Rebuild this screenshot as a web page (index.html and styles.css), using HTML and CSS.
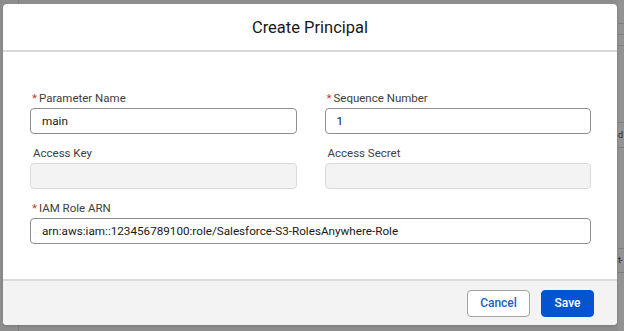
FILE: index.html
```html
<!DOCTYPE html>
<html lang="en">
<head>
<meta charset="utf-8">
<title>Create Principal</title>
<link rel="stylesheet" href="styles.css">
</head>
<body>
<div class="backdrop">
  <div class="page-behind" aria-hidden="true">
    <div class="behind-col"></div>
    <div class="behind-strip">
      <span class="bl bl1"></span><span class="bl bl2"></span><span class="bl bl3"></span>
      <span class="bl bl4"></span><span class="bt bt1">d</span><span class="bl bl5"></span>
      <span class="bl bl6"></span><span class="bt bt2">t-</span><span class="bl bl7"></span>
    </div>
  </div>
  <section class="modal">
    <header class="modal-header">
      <h2 class="modal-title">Create Principal</h2>
    </header>
    <div class="modal-body">
      <div class="form-grid">
        <div class="field">
          <label class="field-label"><abbr class="req">*</abbr>Parameter Name</label>
          <div class="input">main</div>
        </div>
        <div class="field">
          <label class="field-label"><abbr class="req">*</abbr>Sequence Number</label>
          <div class="input">1</div>
        </div>
        <div class="field">
          <label class="field-label">Access Key</label>
          <div class="input disabled"></div>
        </div>
        <div class="field">
          <label class="field-label">Access Secret</label>
          <div class="input disabled"></div>
        </div>
        <div class="field wide">
          <label class="field-label"><abbr class="req">*</abbr>IAM Role ARN</label>
          <div class="input">arn:aws:iam::123456789100:role/Salesforce-S3-RolesAnywhere-Role</div>
        </div>
      </div>
    </div>
    <footer class="modal-footer">
      <button class="btn btn-neutral">Cancel</button>
      <button class="btn btn-brand">Save</button>
    </footer>
  </section>
</div>
</body>
</html>
```

FILE: styles.css
```css
* { box-sizing: border-box; }
html, body { margin: 0; padding: 0; }
body {
  width: 624px;
  height: 331px;
  overflow: hidden;
  background: #8d8d8d;
  font-family: Roboto, "Liberation Sans", Arial, sans-serif;
  color: #181818;
}
.backdrop {
  position: relative;
  width: 624px;
  height: 331px;
  padding: 4px 7px 6px 3px;
}
.page-behind {
  position: absolute;
  inset: 0;
  pointer-events: none;
}
.behind-col {
  position: absolute;
  left: 18px;
  top: 0;
  bottom: 0;
  width: 1px;
  background: #7c7c7c;
}
.behind-strip {
  position: absolute;
  left: 618px;
  top: 0;
  width: 6px;
  height: 331px;
  background: #939393;
  overflow: hidden;
}
.bl { position: absolute; left: 0; right: 0; height: 1px; background: #7f7f7f; }
.bl1 { top: 23px; }
.bl2 { top: 34px; }
.bl3 { top: 45px; }
.bl4 { top: 122px; }
.bl5 { top: 147px; }
.bl6 { top: 248px; }
.bl7 { top: 272px; }
.bt { position: absolute; left: 0; font-size: 9px; color: #2a2a2a; line-height: 10px; letter-spacing: -1px; }
.bt1 { top: 130px; }
.bt2 { top: 255px; }

.modal {
  position: relative;
  width: 614px;
  height: 321px;
  background: #fff;
  border-radius: 4px;
  display: flex;
  flex-direction: column;
  overflow: hidden;
  box-shadow: 0 1px 2px rgba(0,0,0,0.15);
}
.modal-header {
  height: 48px;
  border-bottom: 2px solid #d9d9d9;
  display: flex;
  align-items: center;
  justify-content: center;
  padding-top: 1px;
}
.modal-title {
  margin: 0;
  font-size: 16.5px;
  font-weight: 400;
  color: #181818;
}
.modal-body {
  flex: 1;
  padding: 39px 26px 0 27px;
}
.form-grid {
  display: grid;
  grid-template-columns: 1fr 1fr;
  column-gap: 28px;
  row-gap: 12px;
}
.field { display: flex; flex-direction: column; }
.field.wide { grid-column: 1 / -1; }
.field-label {
  height: 14px;
  line-height: 14px;
  margin-bottom: 3px;
  font-size: 11.5px;
  color: #3e3e3c;
  padding-left: 3px;
}
.req {
  color: #c23934;
  text-decoration: none;
  margin-right: 2px;
  margin-left: -1px;
}
.input {
  height: 26px;
  border: 1px solid #8f8f8f;
  border-radius: 4px;
  padding: 0 11px;
  display: flex;
  align-items: center;
  font-size: 11.7px;
  color: #181818;
  background: #fff;
}
.input.disabled {
  background: #f3f3f3;
  border-color: #d9d9d9;
}
.modal-footer {
  height: 46px;
  background: #f3f3f3;
  border-top: 2px solid #dcdcdc;
  display: flex;
  align-items: center;
  justify-content: flex-end;
  gap: 11px;
  padding: 0 23px 0 0;
}
.btn {
  height: 27px;
  border-radius: 4px;
  font-family: inherit;
  font-size: 12px;
  font-weight: 500;
  padding: 0;
  cursor: pointer;
}
.btn-neutral {
  width: 63px;
  background: #fff;
  border: 1px solid #a3a3a3;
  color: #1b60c4;
}
.btn-brand {
  width: 53px;
  background: #0454d0;
  border: 1px solid #0454d0;
  color: #fff;
}
```
